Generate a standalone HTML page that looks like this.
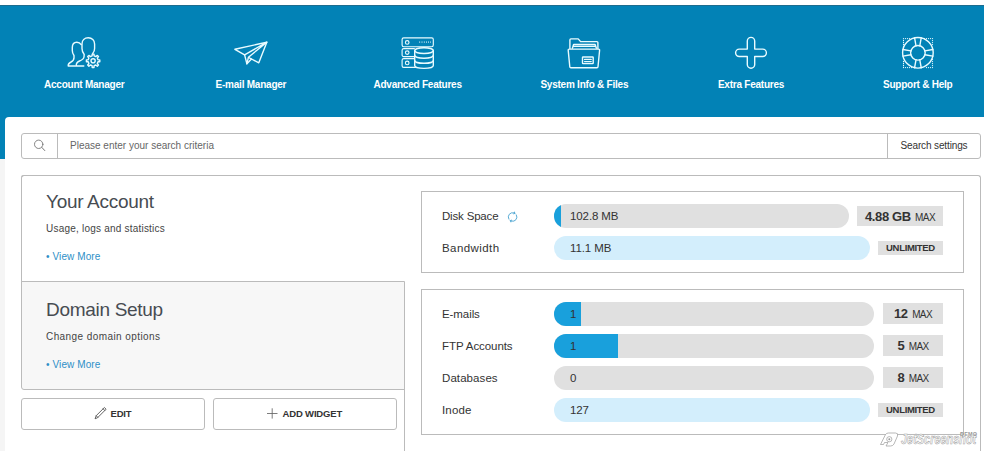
<!DOCTYPE html>
<html lang="en">
<head>
<meta charset="utf-8">
<title>Control Panel</title>
<style>
*{box-sizing:border-box;margin:0;padding:0}
html,body{width:984px;height:451px;overflow:hidden}
body{position:relative;background:#f5f5f5;font-family:"Liberation Sans",Arial,sans-serif;color:#333}
.abs{position:absolute}
#topwhite{left:0;top:0;width:984px;height:5px;background:#fff}
#blue{left:0;top:5px;width:984px;height:154px;background:#0282b6;border-top:1px solid #1d6c8e}
#card{left:5px;top:116.5px;width:1000px;height:400px;background:#fff;border-radius:4px 0 0 0}
/* nav */
.nav{position:absolute;top:0;width:166.67px;text-align:center;color:#fff}
.nav svg{position:absolute;left:50%;overflow:visible}
.nav span{position:absolute;left:-20px;right:-20px;top:78px;font-weight:bold;font-size:10px;line-height:14px;letter-spacing:-0.23px;white-space:nowrap}
/* search */
#search{left:21px;top:133px;width:960px;height:26px;border:1px solid #bbb;border-radius:3px;background:#fff}
#search .d1{left:35px;top:0;width:1px;height:24px;background:#bbb}
#search .d2{left:865px;top:0;width:1px;height:24px;background:#bbb}
#search .ph{left:48px;top:0;line-height:23px;font-size:10px;color:#666;white-space:nowrap;letter-spacing:0}
#search .ss{left:866px;width:92px;top:0;line-height:23px;font-size:10px;color:#333;text-align:center;white-space:nowrap;letter-spacing:-.13px}
/* main */
#main{left:21px;top:175px;width:960px;height:300px;border:1px solid #bbb;border-left:0;border-bottom:0;border-radius:3px 3px 0 0;background:#fff}
#yal{left:21px;top:175px;width:12px;height:107px;border-left:1px solid #bbb;border-top:1px solid #bbb;border-radius:3px 0 0 0}
#dom{left:21px;top:281px;width:384px;height:109px;background:#f7f7f7;border:1px solid #bbb;border-radius:0 0 0 3px}
#vline{left:404px;top:389px;width:1px;height:70px;background:#bbb}
.h{font-size:19px;line-height:24px;color:#474c52;white-space:nowrap;letter-spacing:-.3px}
.sub{font-size:10px;line-height:14px;color:#444;white-space:nowrap;letter-spacing:.215px}
.vm{font-size:10px;line-height:14px;color:#2e8fc7;white-space:nowrap;letter-spacing:.1px}
.btn{top:398px;height:32px;border:1px solid #bbb;border-radius:3px;background:#fff}
.btn span{position:absolute;top:0;line-height:30px;font-size:9.5px;font-weight:bold;color:#333;white-space:nowrap;letter-spacing:-.18px}
.box{left:421px;width:543px;border:1px solid #bbb;background:#fff}
.lbl{left:442px;font-size:11.5px;line-height:16px;color:#333;white-space:nowrap;letter-spacing:.35px}
.bar{left:553.5px;height:24px;border-radius:12px;background:#e0e0e0;overflow:hidden}
.bar.u{background:#d3eefc}
.bar i{position:absolute;left:0;top:0;height:24px;background:#19a0dc}
.val{left:570px;font-size:11.5px;line-height:24px;color:#333;white-space:nowrap;letter-spacing:-.1px}
.bdg{background:#e0e0e0;text-align:center;white-space:nowrap;color:#333}
.bdg b{font-size:13px;letter-spacing:-.4px}
.bdg small{font-size:10px;letter-spacing:-.6px}
.bdg small.u{font-weight:bold;font-size:9.5px;letter-spacing:-.32px;position:relative;top:-2.5px}
</style>
</head>
<body>
<div class="abs" id="blue"></div>
<div class="abs" id="topwhite"></div>
<div class="abs" id="card"></div>

<svg class="abs" id="icons" style="left:0;top:0" width="984" height="120" viewBox="0 0 984 120" fill="none" stroke="#e9fbff" stroke-width="1.4" stroke-linecap="round" stroke-linejoin="round">
<!-- account manager -->
<path d="M75.5 66H68.2C68 64 68.8 63 71 62C73 61 74 59.5 74 57.8V55.5C72.8 54 72.3 52.5 72.3 50.5V47.5C72.3 44.5 74 42.2 76.8 42.2C78.8 42.2 80.3 43.2 81.2 44.6"/>
<path d="M83.8 66H76.3C76 63.5 77 62 79.5 61C82 60 83.8 58.8 84 57L84.2 54.5C82.8 52.8 82 50.8 82 48.5V44C82 40.5 84.5 37.8 88.3 37.8C92 37.8 94.6 40.5 94.6 44V48.5C94.6 50.5 93.8 52.3 92.7 53.4"/>
<path d="M92.1 55.9 L92.2 54.1 L94.0 54.1 L94.1 55.9 L95.8 56.6 L97.3 55.4 L98.5 56.6 L97.3 58.1 L98.0 59.8 L99.8 59.9 L99.8 61.7 L98.0 61.8 L97.3 63.5 L98.5 65.0 L97.3 66.2 L95.8 65.0 L94.1 65.7 L94.0 67.5 L92.2 67.5 L92.1 65.7 L90.4 65.0 L88.9 66.2 L87.7 65.0 L88.9 63.5 L88.2 61.8 L86.4 61.7 L86.4 59.9 L88.2 59.8 L88.9 58.1 L87.7 56.6 L88.9 55.4 L90.4 56.6Z"/>
<circle cx="93.1" cy="60.8" r="2.1"/>
<!-- e-mail manager -->
<path d="M266.8 42.2L234.9 49.3L244.6 54.9L246.9 63.7L251.5 59L258.8 62.8Z"/>
<path d="M266.8 42.2L244.6 54.9M266.8 42.2L248.4 57.3L246.9 63.7M248.4 57.3L251.5 59"/>
<!-- advanced features -->
<g stroke-width="1.15">
<rect x="402.1" y="37.9" width="31.2" height="8.8" rx="1.6"/>
<path d="M414.4 48.6H403.7A1.6 1.6 0 0 0 402.1 50.2V55A1.6 1.6 0 0 0 403.7 56.6H414.4"/>
<path d="M414.4 58.6H403.7A1.6 1.6 0 0 0 402.1 60.2V65.7A1.6 1.6 0 0 0 403.7 67.3H415.5"/>
<circle cx="407.2" cy="42.4" r="1.8"/><circle cx="407.2" cy="52.6" r="1.8"/><circle cx="407.2" cy="62.9" r="1.8"/>
</g>
<path d="M419.5 42.1H431" stroke-width="1.8" stroke-dasharray="0.6 1.6" stroke-linecap="butt"/>
<ellipse cx="424" cy="50.6" rx="9.3" ry="2.9"/>
<path d="M414.7 50.6V65.5C414.7 67.1 418.9 68.4 424 68.4S433.3 67.1 433.3 65.5V50.6"/>
<path d="M414.7 55.3C414.7 56.9 418.9 58.2 424 58.2S433.3 56.9 433.3 55.3M414.7 60.4C414.7 62 418.9 63.3 424 63.3S433.3 62 433.3 60.4"/>
<!-- system info & files -->
<path d="M569.9 48.4V39.9A1 1 0 0 1 570.9 38.9H578.2L580.6 41.6H596.9A1 1 0 0 1 597.9 42.6V48.4"/>
<path d="M572.4 48.2L573.6 44.4H595.1L596.4 48.2M573 46.3H595.7"/>
<path d="M569.2 49.1H598.6A1 1 0 0 1 599.6 50.2L598 66.7A1.1 1.1 0 0 1 596.9 67.7H570.9A1.1 1.1 0 0 1 569.8 66.7L568.2 50.2A1 1 0 0 1 569.2 49.1Z"/>
<rect x="582.5" y="57" width="10.7" height="6.6" rx="0.6"/>
<path d="M584.6 59.4H591.2M584.6 61.6H591.2"/>
<!-- extra features -->
<path d="M747.3 49.099999999999994V41.1A3.7 3.7 0 0 1 754.7 41.1V49.099999999999994H762.6999999999999A3.7 3.7 0 0 1 762.6999999999999 56.5H754.7V64.5A3.7 3.7 0 0 1 747.3 64.5V56.5H739.3000000000001A3.7 3.7 0 0 1 739.3000000000001 49.099999999999994Z"/>
<!-- support & help -->
<circle cx="917.9" cy="52.8" r="15.3"/><circle cx="917.9" cy="52.8" r="7.3"/>
<path d="M914.6 37.9L916.0 45.8M921.2 37.9L919.8 45.8M932.8 49.5L924.9 50.9M932.8 56.1L924.9 54.7M921.2 67.7L919.8 59.8M914.6 67.7L916.0 59.8M903.0 56.1L910.9 54.7M903.0 49.5L910.9 50.9"/>
<path d="M903.5 46.5V38.5H911.5M924.5 38.5H932.5V46.5M932.5 59.5V67.5H924.5M911.5 67.5H903.5V59.5" stroke-dasharray="0.01 1.99" stroke-width="1.25"/>
</svg>
<!-- NAV -->
<div class="nav" style="left:.9px"><span>Account Manager</span></div>
<div class="nav" style="left:167.6px"><span>E-mail Manager</span></div>
<div class="nav" style="left:334.3px"><span>Advanced Features</span></div>
<div class="nav" style="left:501px"><span>System Info &amp; Files</span></div>
<div class="nav" style="left:667.7px"><span>Extra Features</span></div>
<div class="nav" style="left:834.4px"><span>Support &amp; Help</span></div>

<!-- SEARCH -->
<div class="abs" id="search">
  <div class="abs d1"></div><div class="abs d2"></div>
  <div class="abs ph">Please enter your search criteria</div>
  <div class="abs ss">Search settings</div>
</div>

<!-- MAIN -->
<div class="abs" id="main"></div>
<div class="abs" id="yal"></div>
<div class="abs" id="dom"></div>
<div class="abs" id="vline"></div>

<div class="abs h" style="left:46px;top:189.5px">Your Account</div>
<div class="abs sub" style="left:46px;top:221.8px">Usage, logs and statistics</div>
<div class="abs vm" style="left:46px;top:250px">&bull; View More</div>

<div class="abs h" style="left:46px;top:298px">Domain Setup</div>
<div class="abs sub" style="left:46px;top:329.6px;letter-spacing:.42px">Change domain options</div>
<div class="abs vm" style="left:46px;top:358px">&bull; View More</div>

<div class="abs btn" style="left:21px;width:184px"><span style="left:88.5px">EDIT</span></div>
<div class="abs btn" style="left:213px;width:184px"><span style="left:68.6px">ADD WIDGET</span></div>

<!-- BOX 1 -->
<div class="abs box" style="top:191px;height:82px"></div>
<div class="abs lbl" style="top:208px;letter-spacing:-.18px">Disk Space</div>
<div class="abs lbl" style="top:240px;letter-spacing:.43px">Bandwidth</div>
<div class="abs bar" style="top:204px;width:295.5px"><i style="width:7px"></i></div>
<div class="abs bar u" style="top:236px;width:316.5px"></div>
<div class="abs val" style="top:204px">102.8 MB</div>
<div class="abs val" style="top:236px">11.1 MB</div>
<div class="abs bdg" style="left:857px;top:206px;width:86px;height:20.3px;line-height:20.6px"><b>4.88 GB</b> <small>MAX</small></div>
<div class="abs bdg" style="left:878px;top:241px;width:65px;height:14px;line-height:14px"><small class="u">UNLIMITED</small></div>

<!-- BOX 2 -->
<div class="abs box" style="top:289px;height:146px"></div>
<div class="abs lbl" style="top:306px;letter-spacing:-.08px">E-mails</div>
<div class="abs lbl" style="top:338px;letter-spacing:-.07px">FTP Accounts</div>
<div class="abs lbl" style="top:370px;letter-spacing:.08px">Databases</div>
<div class="abs lbl" style="top:402px;letter-spacing:.17px">Inode</div>
<div class="abs bar" style="top:302px;width:320.5px"><i style="width:27.5px"></i></div>
<div class="abs bar" style="top:334px;width:320.5px"><i style="width:64.5px"></i></div>
<div class="abs bar" style="top:366px;width:320.5px"></div>
<div class="abs bar u" style="top:398px;width:316.5px"></div>
<div class="abs val" style="top:302px">1</div>
<div class="abs val" style="top:334px">1</div>
<div class="abs val" style="top:366px">0</div>
<div class="abs val" style="top:398px">127</div>
<div class="abs bdg" style="left:883px;top:303.2px;width:60px;height:20.4px;line-height:20px"><b>12</b> <small>MAX</small></div>
<div class="abs bdg" style="left:883px;top:335.2px;width:60px;height:20.4px;line-height:20px"><b>5</b> <small>MAX</small></div>
<div class="abs bdg" style="left:883px;top:367.2px;width:60px;height:20.4px;line-height:20px"><b>8</b> <small>MAX</small></div>
<div class="abs bdg" style="left:878px;top:403px;width:65px;height:14px;line-height:14px"><small class="u">UNLIMITED</small></div>

<svg class="abs" style="left:0;top:120px" width="984" height="331" viewBox="0 120 984 331" fill="none" stroke-linecap="round" stroke-linejoin="round">
<!-- search -->
<circle cx="38.7" cy="144.3" r="4.2" stroke="#777" stroke-width=".9"/><path d="M41.8 147.4L44.8 150.6" stroke="#777" stroke-width="1"/>
<!-- refresh -->
<g stroke="#4fa6d2" stroke-width=".95">
<path d="M508.88 219.15A4.3 4.3 0 0 1 513.71 212.85M516.32 214.85A4.3 4.3 0 0 1 511.49 221.15"/>
<path d="M515.71 213.38L514.16 211.18L513.27 214.51ZM509.49 220.62L511.04 222.82L511.93 219.49Z" fill="#4fa6d2" stroke="none"/>
</g>
<!-- pencil -->
<g stroke="#555" stroke-width=".9">
<path d="M95.2 418.4L96.2 415.7L104.4 407.5L106.1 409.2L97.9 417.4Z"/>
<path d="M103.1 408.8L104.8 410.5M96.2 415.7L97.9 417.4"/>
</g>
<!-- plus -->
<path d="M267 413.5H277.5M272.2 408.3V418.6" stroke="#666" stroke-width=".85" stroke-linecap="butt"/>
</svg>
<!-- watermark -->
<div class="abs" id="wm" style="left:901px;top:430.5px;font:italic bold 14px/16px 'Liberation Sans',Arial,sans-serif;color:#fff;-webkit-text-stroke:.6px #a4a4a4;white-space:nowrap;transform:scaleX(.78);transform-origin:0 0">JetScreenshot</div>
<div class="abs" id="wmd" style="left:960px;top:431px;font:bold 5.5px/7px 'Liberation Sans',Arial,sans-serif;color:#999;letter-spacing:.2px;white-space:nowrap">DEMO</div>
<svg class="abs" style="left:878px;top:430px" width="24" height="18" viewBox="878 430 24 18" fill="#fff" stroke="#9a9a9a" stroke-width=".7">
<path d="M880.5 444.5L885.5 434.5Q886.5 433 888.5 433H895.5Q898.5 433 897.5 436L894 444Q893 446 890.5 446H886L888 442.5H884.5L883.5 444.5Z"/>
<circle cx="889.3" cy="439.2" r="2.6"/><circle cx="889.3" cy="439.2" r="1" fill="#9a9a9a" stroke="none"/>
</svg>
</body>
</html>
